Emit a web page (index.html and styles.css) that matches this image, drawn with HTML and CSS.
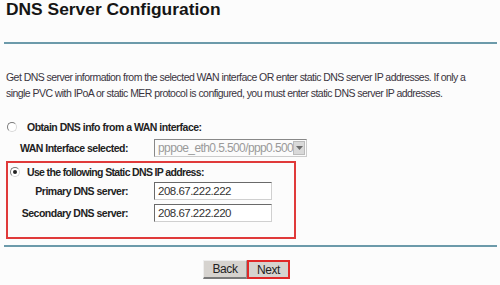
FILE: index.html
```html
<!DOCTYPE html>
<html>
<head>
<meta charset="utf-8">
<link rel="stylesheet" href="styles.css">
</head>
<body>
<div class="page">
  <h1 class="title">DNS Server Configuration</h1>
  <div class="rule"></div>
  <p class="desc">Get DNS server information from the selected WAN interface OR enter static DNS server IP addresses. If only a<br>single PVC with IPoA or static MER protocol is configured, you must enter static DNS server IP addresses.</p>

  <div class="opt opt-first">
    <span class="radio"></span>
    <span class="opt-label">Obtain DNS info from a WAN interface:</span>
  </div>
  <div class="field field-wan">
    <span class="field-label">WAN Interface selected:</span>
    <div class="select">
      <span class="select-text">pppoe_eth0.5.500/ppp0.500</span>
      <span class="select-btn"><svg width="7" height="4" viewBox="0 0 7 4"><path d="M0 0h7L3.5 4z" fill="#6b6b6b"/></svg></span>
    </div>
  </div>

  <div class="static-box">
    <div class="opt opt-second">
      <span class="radio checked"></span>
      <span class="opt-label">Use the following Static DNS IP address:</span>
    </div>
    <div class="field field-primary">
      <span class="field-label">Primary DNS server:</span>
      <div class="textbox">208.67.222.222</div>
    </div>
    <div class="field field-secondary">
      <span class="field-label">Secondary DNS server:</span>
      <div class="textbox">208.67.222.220</div>
    </div>
  </div>

  <div class="rule rule-bottom"></div>
  <div class="buttons">
    <button class="btn">Back</button>
    <button class="btn btn-next">Next</button>
  </div>
</div>
</body>
</html>
```
FILE: styles.css
```css
html, body {
  margin: 0;
  padding: 0;
  background: #fcfcfc;
}
body {
  font-family: "Liberation Sans", Arial, sans-serif;
  color: #333;
  width: 500px;
  height: 285px;
  overflow: hidden;
}
.page {
  padding: 0 3px 0 4px;
}
.title {
  margin: 0;
  padding: 0 0 0 2px;
  height: 42px;
  font-size: 17.4px;
  font-weight: bold;
  color: #151515;
  line-height: 18px;
}
.rule {
  height: 2px;
  background: #6c9aaa;
}
.desc {
  margin: 25px -8px 0 2px;
  font-size: 10.5px;
  letter-spacing: -0.55px;
  line-height: 16px;
  color: #3a3440;
  white-space: nowrap;
}
.opt {
  display: flex;
  align-items: center;
  font-size: 10.5px;
  letter-spacing: -0.5px;
  font-weight: bold;
  color: #222;
}
.opt-first {
  height: 18px;
  margin-top: 17px;
  padding-left: 3px;
}
.opt-second {
  height: 17px;
  padding-left: 2px;
  letter-spacing: -0.65px;
}
.radio {
  width: 8px;
  height: 8px;
  border-radius: 50%;
  border: 1px solid #7a7a7a;
  border-right-color: #d8d8d8;
  border-bottom-color: #d8d8d8;
  background: #fff;
  position: relative;
  flex: none;
}
.radio.checked::after {
  content: "";
  position: absolute;
  left: 2px;
  top: 2px;
  width: 4px;
  height: 4px;
  border-radius: 50%;
  background: #222;
}
.opt-first .opt-label { margin-left: 10px; }
.opt-second .opt-label { margin-left: 7px; }
.field {
  display: flex;
  align-items: center;
  height: 22px;
  font-size: 10.5px;
  letter-spacing: -0.5px;
  font-weight: bold;
  color: #222;
}
.field-label {
  text-align: right;
  white-space: nowrap;
  flex: none;
}
.field-wan { margin-top: 1px; }
.field-wan .field-label { width: 124px; }
.select {
  margin-left: 26px;
  width: 151px;
  height: 16px;
  border: 1px solid #888;
  border-right-color: #ccc;
  border-bottom-color: #ccc;
  background: #fbfbfb;
  display: flex;
  align-items: center;
}
.select-text {
  flex: 1;
  padding-left: 3px;
  font-size: 12px;
  letter-spacing: -0.6px;
  font-weight: normal;
  color: #9a9a9a;
  white-space: nowrap;
  overflow: hidden;
}
.select-btn {
  width: 12px;
  height: 14px;
  margin-right: 1px;
  background: #d9d9d9;
  border: 1px solid #bbb;
  box-sizing: border-box;
  display: flex;
  align-items: center;
  justify-content: center;
  flex: none;
}
.static-box {
  margin-top: 2px;
  margin-left: 2px;
  width: 286px;
  height: 74px;
  border: 2px solid #e03a3a;
}
.field-primary .field-label, .field-secondary .field-label { width: 120px; }
.textbox {
  margin-left: 26px;
  width: 113px;
  height: 16px;
  border: 1px solid #6a6a6a;
  border-right-color: #d0d0d0;
  border-bottom-color: #d0d0d0;
  background: #fff;
  font-size: 11.5px;
  letter-spacing: -0.5px;
  font-weight: normal;
  color: #333;
  line-height: 16px;
  padding-left: 3px;
}
.rule-bottom {
  margin-top: 6px;
}
.buttons {
  display: flex;
  justify-content: center;
  margin-top: 13px;
  padding-right: 8px;
}
.btn {
  font-family: "Liberation Sans", Arial, sans-serif;
  font-size: 12px;
  letter-spacing: -0.4px;
  color: #222;
  height: 19px;
  padding: 0;
  width: 44px;
  background: #d6d3cf;
  border: 1px solid #eee;
  border-right-color: #999;
  border-bottom: 2px solid #7a7a7a;
  margin: 0;
}
.btn-next {
  width: 43px;
  border: 2px solid #e02828;
}
```
